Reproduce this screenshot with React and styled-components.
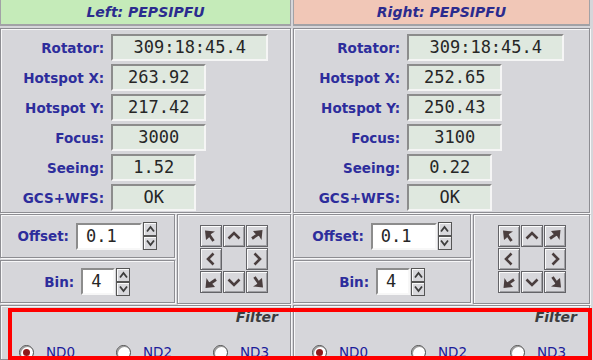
import React from 'react';
import styled, { createGlobalStyle } from 'styled-components';

const GlobalStyle = createGlobalStyle`
  html, body { margin: 0; padding: 0; background: #d6d6da; }
  body { font-family: "DejaVu Sans", sans-serif; }
`;

const sides = [
  {
    key: 'left', title: 'Left: PEPSIPFU', tint: '#c5ebb9', width: 291,
    rows: [
      ['Rotator:', '309:18:45.4', 157],
      ['Hotspot X:', '263.92', 95],
      ['Hotspot Y:', '217.42', 95],
      ['Focus:', '3000', 95],
      ['Seeing:', '1.52', 85],
      ['GCS+WFS:', 'OK', 85],
    ],
  },
  {
    key: 'right', title: 'Right: PEPSIPFU', tint: '#f1c7b7', width: 297,
    rows: [
      ['Rotator:', '309:18:45.4', 157],
      ['Hotspot X:', '252.65', 95],
      ['Hotspot Y:', '250.43', 95],
      ['Focus:', '3100', 95],
      ['Seeing:', '0.22', 85],
      ['GCS+WFS:', 'OK', 85],
    ],
  },
];

const Chevron = ({ rot }) => (
  <svg width="20" height="20" viewBox="0 0 20 20" style={{ transform: `rotate(${rot}deg)` }}>
    <polyline points="4.5,12.5 10,7 15.5,12.5" fill="none" stroke="#4a3e3e" strokeWidth="2.6" strokeLinejoin="miter" />
  </svg>
);

// arrow pointing to the upper left; rotated for the other corners
const Diagonal = ({ rot }) => (
  <svg width="20" height="20" viewBox="0 0 20 20" style={{ transform: `rotate(${rot}deg)` }}>
    <polygon points="4,4.5 14,5.5 10,8 7.5,12 5,14" fill="#4a3e3e" />
    <line x1="8" y1="8.5" x2="12.5" y2="15" stroke="#4a3e3e" strokeWidth="2.8" />
  </svg>
);

const SpinArrow = ({ down }) => (
  <svg width="11" height="10" viewBox="0 0 11 10" style={{ transform: down ? 'rotate(180deg)' : 'none' }}>
    <polyline points="2,7.5 5.5,3 9,7.5" fill="none" stroke="#3c3c3c" strokeWidth="1.8" />
  </svg>
);

const pad = [
  { d: true, rot: 0 }, { d: false, rot: 0 }, { d: true, rot: 90 },
  { d: false, rot: -90 }, null, { d: false, rot: 90 },
  { d: true, rot: -90 }, { d: false, rot: 180 }, { d: true, rot: 180 },
];

function Spinner() {
  return (
    <SpinBox>
      <SpinButton><SpinArrow /></SpinButton>
      <SpinButton><SpinArrow down /></SpinButton>
    </SpinBox>
  );
}

function Side({ side }) {
  return (
    <Column $w={side.width}>
      <Header $tint={side.tint}>{side.title}</Header>
      <InfoPanel>
        {side.rows.map(([label, value, w]) => (
          <React.Fragment key={label}>
            <Label>{label}</Label>
            <ValueBox $w={w}>{value}</ValueBox>
          </React.Fragment>
        ))}
      </InfoPanel>
      <LowerRow>
        <LeftStack>
          <Frame $h={44}>
            <Label>Offset:</Label>
            <InputRow>
              <Entry $w={66}>0.1</Entry>
              <Spinner />
            </InputRow>
          </Frame>
          <Frame $h={43}>
            <Label>Bin:</Label>
            <InputRow>
              <Entry $w={34}>4</Entry>
              <Spinner />
            </InputRow>
          </Frame>
        </LeftStack>
        <PadFrame>
          <PadGrid>
            {pad.map((p, i) =>
              p ? (
                <PadButton key={i}>
                  {p.d ? <Diagonal rot={p.rot} /> : <Chevron rot={p.rot} />}
                </PadButton>
              ) : (
                <span key={i} />
              )
            )}
          </PadGrid>
        </PadFrame>
      </LowerRow>
      <FilterFrame>
        <FilterTitle>Filter</FilterTitle>
        <RadioRow $col={Math.round(side.width / 3)}>
          {['ND0', 'ND2', 'ND3'].map((nd, i) => (
            <RadioItem key={nd}>
              <RadioDot $on={i === 0} />
              <RadioText>{nd}</RadioText>
            </RadioItem>
          ))}
        </RadioRow>
      </FilterFrame>
    </Column>
  );
}

export default function App() {
  return (
    <>
      <GlobalStyle />
      <Page>
        {sides.map((s) => <Side key={s.key} side={s} />)}
        <Highlight />
      </Page>
    </>
  );
}

const Page = styled.div`
  position: relative;
  display: flex;
  gap: 2px;
  width: 593px;
  height: 360px;
  padding-right: 3px;
  box-sizing: border-box;
  overflow: hidden;
  background: #d6d6da;
`;

const Column = styled.div`
  display: flex;
  flex-direction: column;
  gap: 1px;
  width: ${(p) => p.$w}px;
  flex-shrink: 0;
`;

const Header = styled.div`
  height: 24px;
  line-height: 24px;
  background: ${(p) => p.$tint};
  border-bottom: 2px solid #a2a2a6;
  border-right: 1px solid #a2a2a6;
  border-left: 1px solid #a2a2a6;
  text-align: center;
  font-size: 14px;
  font-weight: bold;
  font-style: italic;
  color: #2b2b8e;
`;

const groove = `
  border: 1px solid #8d8d92;
  box-shadow: inset 1px 1px 0 #f7f7f8, 1px 1px 0 #f7f7f8;
  box-sizing: border-box;
`;

const InfoPanel = styled.div`
  ${groove}
  height: 185px;
  display: grid;
  grid-template-columns: auto auto;
  justify-content: center;
  align-content: start;
  column-gap: 7px;
  row-gap: 3px;
  padding-top: 5px;
  margin-top: 1px;
`;

const Label = styled.div`
  justify-self: end;
  align-self: center;
  font-size: 13.5px;
  font-weight: bold;
  color: #2d2d9c;
`;

const ValueBox = styled.div`
  justify-self: start;
  width: ${(p) => p.$w}px;
  height: 27px;
  box-sizing: border-box;
  border: 2px solid;
  border-color: #8c8c8c #f5f5f5 #f5f5f5 #8c8c8c;
  background: #dfe8df;
  text-align: center;
  line-height: 23px;
  font-family: "DejaVu Sans Mono", monospace;
  font-size: 17px;
  color: #262626;
`;

const LowerRow = styled.div`
  display: flex;
  gap: 2px;
  height: 90px;
`;

const LeftStack = styled.div`
  display: flex;
  flex-direction: column;
  gap: 2px;
  width: 60%;
`;

const Frame = styled.div`
  ${groove}
  height: ${(p) => p.$h}px;
  display: flex;
  align-items: center;
  justify-content: center;
  gap: 7px;
`;

const InputRow = styled.div`
  display: flex;
  align-items: center;
  gap: 1px;
`;

const Entry = styled.div`
  width: ${(p) => p.$w}px;
  height: 27px;
  box-sizing: border-box;
  border: 2px solid;
  border-color: #8c8c8c #f7f7f7 #f7f7f7 #8c8c8c;
  background: #ffffff;
  padding-left: 8px;
  line-height: 23px;
  font-family: "DejaVu Sans Mono", monospace;
  font-size: 17px;
  color: #262626;
`;

const SpinBox = styled.div`
  display: flex;
  flex-direction: column;
  width: 14px;
`;

const SpinButton = styled.div`
  height: 14px;
  box-sizing: border-box;
  border: 1px solid #555;
  background: #d8d8dc;
  box-shadow: inset 1px 1px 0 #fafafa;
  display: flex;
  align-items: center;
  justify-content: center;
`;

const PadFrame = styled.div`
  ${groove}
  flex: 1;
  display: flex;
  align-items: center;
  justify-content: center;
`;

const PadGrid = styled.div`
  display: grid;
  grid-template-columns: repeat(3, 22px);
  grid-auto-rows: 22px;
  gap: 1px;
`;

const PadButton = styled.div`
  box-sizing: border-box;
  border: 1px solid #646468;
  background: #d8d8dc;
  box-shadow: inset 1px 1px 0 #fbfbfb, inset -1px -1px 0 #a0a0a4;
  display: flex;
  align-items: center;
  justify-content: center;
`;

const FilterFrame = styled.div`
  ${groove}
  flex: 1;
  display: flex;
  flex-direction: column;
  overflow: hidden;
`;

const FilterTitle = styled.div`
  text-align: right;
  padding: 3px 12px 0 0;
  font-size: 14px;
  font-weight: bold;
  font-style: italic;
  color: #3c3c3e;
`;

const RadioRow = styled.div`
  display: grid;
  grid-template-columns: repeat(3, ${(p) => p.$col}px);
  margin-left: 18px;
  margin-top: 19px;
`;

const RadioItem = styled.div`
  display: flex;
  align-items: center;
  gap: 12px;
`;

const RadioDot = styled.span`
  position: relative;
  width: 15px;
  height: 15px;
  box-sizing: border-box;
  border-radius: 50%;
  border: 1px solid #4a4a4a;
  background: #ffffff;
  box-shadow: inset 1px 1px 0 #9a9a9a;
  &::after {
    content: '';
    display: ${(p) => (p.$on ? 'block' : 'none')};
    position: absolute;
    left: 3px;
    top: 3px;
    width: 7px;
    height: 7px;
    border-radius: 50%;
    background: #8e1b1b;
  }
`;

const RadioText = styled.span`
  font-size: 13.5px;
  color: #1c1c9a;
`;

const Highlight = styled.div`
  position: absolute;
  left: 8px;
  top: 308px;
  width: 584px;
  height: 52px;
  box-sizing: border-box;
  border: 4px solid #ff0000;
  pointer-events: none;
`;
